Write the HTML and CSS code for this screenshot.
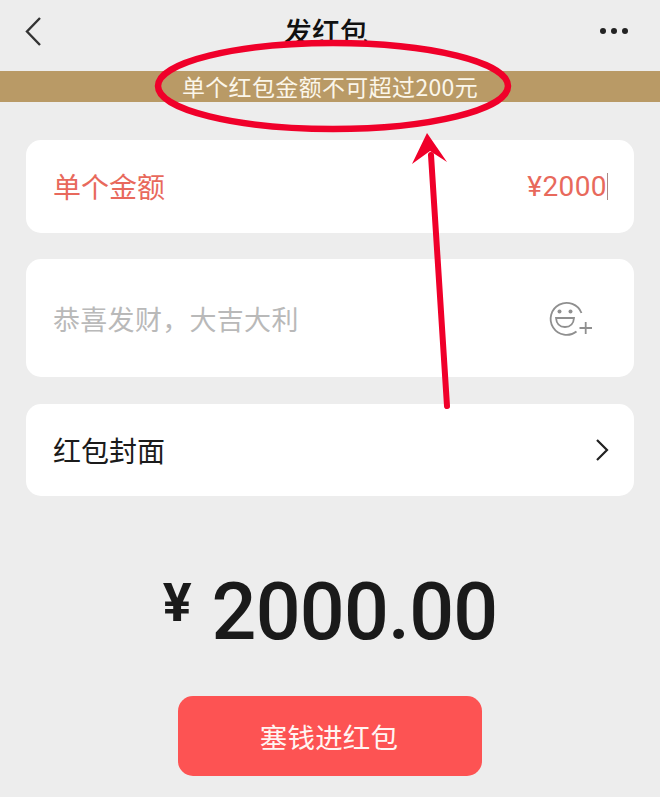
FILE: index.html
```html
<!DOCTYPE html>
<html lang="zh-CN">
<head>
<meta charset="utf-8">
<title>发红包</title>
<link rel="stylesheet" href="styles.css">
</head>
<body>
<div class="page">
  <header class="nav">
    <svg class="back" width="20" height="32" viewBox="0 0 20 32"><path d="M17 3 L4 16.500 L17 30" fill="none" stroke="#333" stroke-width="2.400"/></svg>
    <h1 class="title">发红包</h1>
    <div class="more"><i></i><i></i><i></i></div>
  </header>
  <div class="notice">单个红包金额不可超过200元</div>
  <main class="form">
    <section class="card card-amount">
      <span class="red-text">单个金额</span>
      <span class="value red-text">¥2000<b class="caret"></b></span>
    </section>
    <section class="card card-wish">
      <span class="placeholder">恭喜发财，大吉大利</span>
      <svg class="emoji" width="46" height="40" viewBox="0 0 46 40">
        <path d="M28.500 33.500 A16 16 0 1 1 33.500 15" fill="none" stroke="#8f8f8f" stroke-width="1.800"/>
        <circle cx="11.500" cy="13.500" r="2" fill="#8f8f8f"/>
        <circle cx="22.500" cy="13.500" r="2" fill="#8f8f8f"/>
        <path d="M8 20 H26 C25.500 26 22 29 17 29 C12 29 8.500 26 8 20 Z" fill="none" stroke="#8f8f8f" stroke-width="1.800"/>
        <path d="M31.500 30 H44 M37.700 24 V36" fill="none" stroke="#8f8f8f" stroke-width="1.800"/>
      </svg>
    </section>
    <section class="card card-cover">
      <span>红包封面</span>
      <svg class="chev" width="14" height="24" viewBox="0 0 14 24"><path d="M2 2 L12 12 L2 22" fill="none" stroke="#222" stroke-width="2.200"/></svg>
    </section>
    <div class="total"><span class="yen">¥</span><span class="sum">2000.00</span></div>
    <button class="submit">塞钱进红包</button>
  </main>
  <svg class="markup" width="660" height="797" viewBox="0 0 660 797">
    <ellipse cx="333" cy="86" rx="175" ry="43" fill="none" stroke="#f0002a" stroke-width="6.500"/>
    <path d="M447 406 L431 155" fill="none" stroke="#f0002a" stroke-width="6" stroke-linecap="round"/>
    <path d="M427 133 L412 164 L430 151 L447 162 Z" fill="#f0002a"/>
  </svg>
</div>
</body>
</html>
```
FILE: styles.css
```css
* { box-sizing: border-box; }
html, body { margin: 0; padding: 0; }
body {
  background: #ededed;
  font-family: "Noto Sans CJK SC", "Liberation Sans", sans-serif;
  color: #1b1b1b;
}
.page { position: relative; width: 660px; height: 797px; overflow: hidden; }
.nav {
  height: 71px;
  display: flex;
  align-items: center;
  justify-content: space-between;
  padding: 0 32px 9px 23px;
  position: relative;
}
.title {
  margin: 0;
  position: absolute;
  left: 0;
  right: 8px;
  top: 11px;
  text-align: center;
  font-size: 28px;
  line-height: 40px;
  font-weight: 500;
  color: #111;
}
.more { display: flex; gap: 5px; }
.more i { width: 6px; height: 6px; border-radius: 50%; background: #222; display: block; }
.notice {
  height: 31px;
  background: #b99a66;
  color: #fbf6ea;
  font-size: 23px;
  letter-spacing: .35px;
  line-height: 31px;
  text-align: center;
  font-family: "Noto Sans CJK SC", sans-serif;
}
.form { padding: 38px 26px 0; display: flex; flex-direction: column; }
.card {
  background: #fff;
  border-radius: 15px;
  display: flex;
  align-items: center;
  justify-content: space-between;
  padding: 0 27px;
  font-size: 28px;
  line-height: 40px;
}
.card-amount { height: 93px; padding-right: 26px; padding-bottom: 2px; }
.card-wish { height: 118px; margin-top: 26px; padding-right: 40px; }
.card-cover { height: 92px; margin-top: 27px; padding-right: 25px; }
.red-text { color: #e8695c; }
.value { font-size: 28px; letter-spacing: .4px; padding-top: 2px; display: flex; align-items: center; font-family: "Roboto", "Noto Sans CJK SC", sans-serif; }
.caret { display: block; width: 1px; height: 27px; background: #a98a86; }
.placeholder { color: #b9b9b9; font-size: 27px; letter-spacing: .3px; padding-top: 2px; }
.total {
  margin-top: 66px;
  height: 100px;
  display: flex;
  justify-content: center;
  align-items: flex-start;
  font-family: "Roboto", sans-serif;
  color: #1a1a1a;
}
.yen { font-size: 54px; font-weight: 700; line-height: 60px; margin: 11px 20px 0 0; }
.sum { font-size: 79px; line-height: 100px; font-weight: 500; letter-spacing: -.8px; }
.submit {
  display: block;
  margin: 34px auto 0 152px;
  width: 304px;
  height: 80px;
  border: 0;
  border-radius: 15px;
  background: #fd5353;
  color: #fff5f2;
  font-family: "Noto Sans CJK SC", sans-serif;
  font-size: 27.500px;
  letter-spacing: .2px;
  padding: 0 2px 0 0;
}
.markup { position: absolute; left: 0; top: 0; pointer-events: none; }
```
